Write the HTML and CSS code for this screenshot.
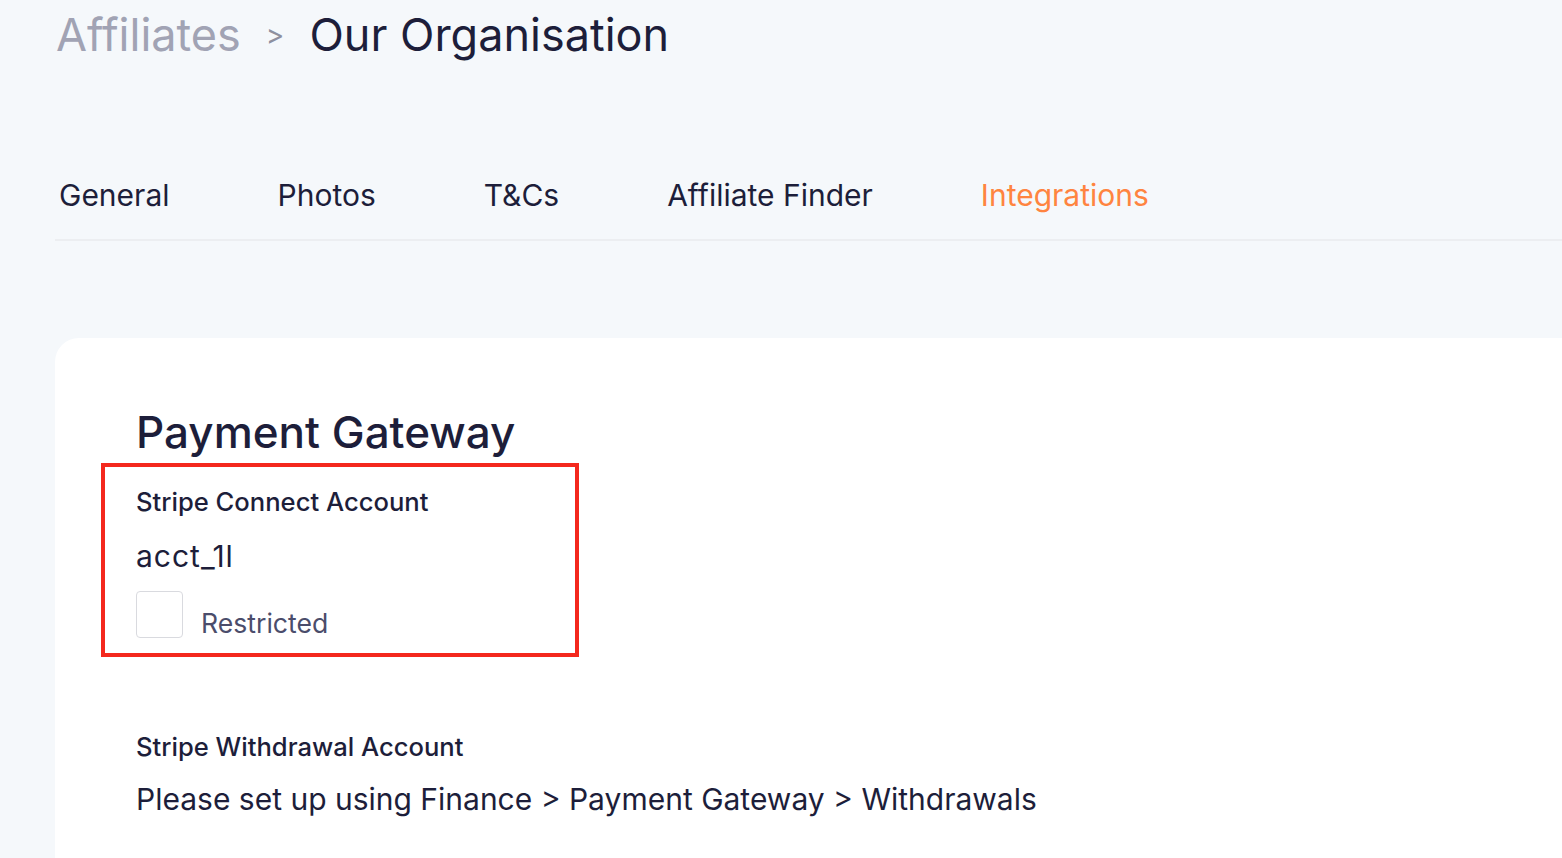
FILE: index.html
```html
<!DOCTYPE html>
<html lang="en">
<head>
  <meta charset="UTF-8">
  <meta name="viewport" content="width=device-width, initial-scale=1.0">
  <title>Our Organisation</title>
  <link rel="stylesheet" href="styles.css">
</head>
<body>
  <div class="page">
    <div class="breadcrumb">
      <span class="crumb-parent">Affiliates</span>
      <span class="crumb-sep">&gt;</span>
      <span class="crumb-current">Our Organisation</span>
    </div>

    <nav class="tabs">
      <a class="tab">General</a>
      <a class="tab">Photos</a>
      <a class="tab">T&amp;Cs</a>
      <a class="tab">Affiliate Finder</a>
      <a class="tab active">Integrations</a>
    </nav>

    <div class="card">
      <h2 class="card-title">Payment Gateway</h2>

      <div class="highlight">
        <div class="field-label">Stripe Connect Account</div>
        <div class="field-value account-id">acct_1l</div>
        <div class="status-row">
          <span class="status-box"></span>
          <span class="status-text">Restricted</span>
        </div>
      </div>

      <div class="field withdraw">
        <div class="field-label">Stripe Withdrawal Account</div>
        <div class="field-value">Please set up using Finance &gt; Payment Gateway &gt; Withdrawals</div>
      </div>
    </div>
  </div>
</body>
</html>
```

FILE: styles.css
```css
body {
  margin: 0;
  background-color: #f5f8fb;
  color: #1d1e3a;
  font-family: Inter, "Noto Sans", sans-serif;
  overflow: hidden;
}

.page {
  padding-left: 55px;
  height: 858px;
  display: flex;
  flex-direction: column;
}

.breadcrumb {
  display: flex;
  align-items: center;
  gap: 25px;
  padding-left: 1px;
  height: 70px;
  line-height: 70px;
}

.crumb-parent {
  font-size: 45px;
  color: #a1a3b4;
}

.crumb-sep {
  font-size: 28px;
  color: #8e909f;
}

.crumb-current {
  font-size: 45px;
  color: #1d1e3a;
}

.tabs {
  display: flex;
  gap: 108px;
  padding: 107px 0 26px 4px;
  border-bottom: 2px solid #eceef1;
}

.tab {
  font-size: 30px;
  color: #1d1e3a;
  line-height: 36px;
}

.tab.active {
  color: #ff8440;
}

.card {
  flex: 1;
  margin-top: 97px;
  background-color: #fff;
  border-top-left-radius: 24px;
  padding: 66px 0 0 81px;
}

.card-title {
  margin: 0;
  font-size: 44px;
  font-weight: 500;
  line-height: 56px;
}

.highlight {
  width: 439px;
  margin: 3px 0 0 -35px;
  padding: 17px 0 15px 31px;
  border: 4px solid #f4281d;
}

.field-label {
  font-size: 25.6px;
  font-weight: 500;
  line-height: 36px;
}

.field-value {
  font-size: 30px;
  line-height: 40px;
  margin-top: 16px;
}

.account-id {
  letter-spacing: 1px;
}

.status-row {
  display: flex;
  align-items: flex-end;
  gap: 18px;
  margin-top: 15px;
}

.status-box {
  box-sizing: border-box;
  width: 47px;
  height: 47px;
  border: 1px solid #d9dadf;
  border-radius: 4px;
}

.status-text {
  font-size: 26.6px;
  color: #4b4d6b;
  line-height: 30px;
}

.withdraw {
  margin-top: 72px;
}

.withdraw .field-value {
  margin-top: 14px;
}
```
